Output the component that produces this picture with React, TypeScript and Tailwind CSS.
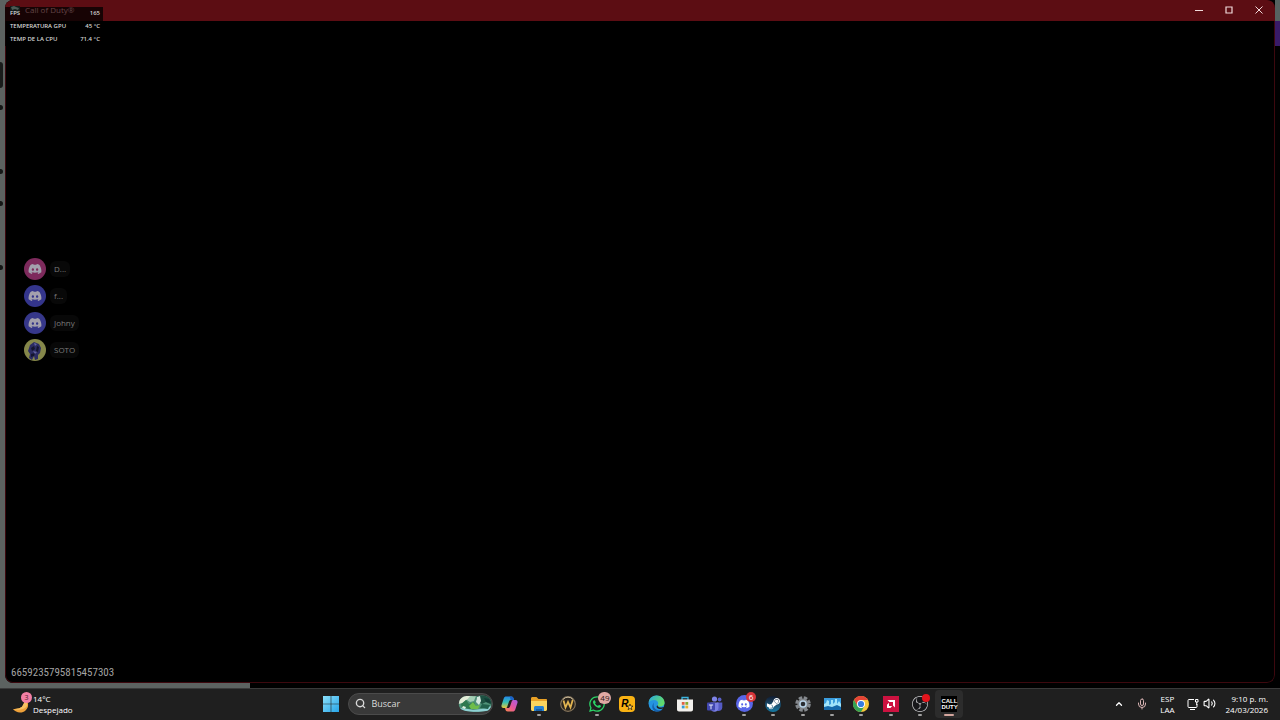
import React from "react";
import { ChevronUp, Mic, Search, Volume2 } from "lucide-react";
import { FaDiscord, FaSteamSymbol, FaWhatsapp } from "react-icons/fa";
import { SiObsstudio } from "react-icons/si";
import clsx from "clsx";

const stats = [
  { label: "FPS", value: "165" },
  { label: "TEMPERATURA GPU", value: "45 °C" },
  { label: "TEMP DE LA CPU", value: "71.4 °C" },
];

const members = [
  { name: "D...", color: "bg-[#7d2a5c]" },
  { name: "f...", color: "bg-[#34358c]" },
  { name: "Johny", color: "bg-[#36378a]" },
  { name: "SOTO", color: "bg-[#85874a]", custom: true },
];

function WindowsLogo() {
  return (
    <svg viewBox="0 0 16 16" className="size-4">
      <defs>
        <linearGradient id="win" x1="0" y1="0" x2="1" y2="1">
          <stop offset="0" stopColor="#8be0fb" />
          <stop offset="1" stopColor="#27a5e8" />
        </linearGradient>
      </defs>
      <path
        fill="url(#win)"
        d="M0 0h7.7v7.7H0zM8.300 0H16v7.700H8.300zM0 8.300h7.700V16H0zM8.300 8.300H16V16H8.300z"
      />
    </svg>
  );
}

function SearchArt() {
  return (
    <svg viewBox="0 0 34 18" className="h-[18px] w-[34px]">
      <defs>
        <clipPath id="artClip">
          <path d="M5 2C9 0 14 2 19 1s10-1 13 3c3 5 1 11-4 12-6 1-14 1-20 0C3 15 0 12 1 8c0-3 2-5 4-6z" />
        </clipPath>
      </defs>
      <g clipPath="url(#artClip)">
        <path fill="#4f9279" d="M0 0h34v18H0z" />
        <path fill="#e4edd8" d="M0 0h14l-2 4-4 1-3 3-5 1z" />
        <path fill="#a5cfb5" d="M12 1h6l-2 5-4 1-3-2z" />
        <path fill="#1d5142" d="M20 0h14v10l-6-3-4 2-6-4z" />
        <path fill="#d5e9df" d="M19 2l3-1 1 5-2 4-3-3z" />
        <path fill="#2e7950" d="M3 9l5-4 3 4 5-2 2 5-6 2-8-1z" />
        <path fill="#6ebd4a" d="M11 11l4-4 3 4 4-1-2 4h-7z" />
        <path fill="#8ed1d4" d="M2 13l8 1 5 1 8-1 11-3v7H2z" />
        <path fill="#21604c" d="M24 9l8 1-2 4-8-1z" />
        <path fill="#123c36" d="M26 3l5 1 2 4-5-1z" />
        <path fill="#dceee0" d="M5 11l3 1-1 2-3-1z" />
      </g>
    </svg>
  );
}

function Copilot() {
  return (
    <svg viewBox="0 0 17 16" className="h-4 w-[17px]">
      <defs>
        <linearGradient id="copA" x1="0" y1="0" x2="0" y2="1">
          <stop offset="0" stopColor="#2389e9" />
          <stop offset=".5" stopColor="#36bfb3" />
          <stop offset="1" stopColor="#e8c83c" />
        </linearGradient>
        <linearGradient id="copB" x1="1" y1="0" x2="0" y2="1">
          <stop offset="0" stopColor="#a55de6" />
          <stop offset=".5" stopColor="#e6559d" />
          <stop offset="1" stopColor="#f78549" />
        </linearGradient>
      </defs>
      <path fill="url(#copA)" d="M5.3.5h5c1.4 0 2 .8 2.3 2l.4 1.500H9.800c-1 0-1.500.6-1.800 1.500l-1.700 5c-.3 1-.9 1.500-1.900 1.500H2.500C.8 12 .1 10.700.6 9L2.800 2.300C3.200 1.100 4 .5 5.300.5z" />
      <path fill="url(#copB)" d="M11.700 15.500h-5c-1.400 0-2-.8-2.300-2L4 12h3.200c1 0 1.500-.6 1.800-1.500l1.700-5c.3-1 .9-1.500 1.900-1.500h1.900c1.700 0 2.400 1.300 1.900 3l-2.200 6.700c-.4 1.200-1.200 1.800-2.500 1.800z" />
      <path fill="#1c61c9" d="M10.300.5c1.400 0 2 .8 2.300 2L13 4H9.800L8.700.5z" />
    </svg>
  );
}

function Explorer() {
  return (
    <svg viewBox="0 0 18 16" className="h-4 w-[18px]">
      <path fill="#e9a126" d="M1 2.500C1 1.600 1.600 1 2.500 1h4L8.500 3H16c.6 0 1 .4 1 1v4H1z" />
      <path fill="#fbd55e" d="M1 5h16v8.500c0 .8-.7 1.500-1.500 1.500h-13C1.700 15 1 14.300 1 13.500z" />
      <path fill="#2781d1" d="M4 15v-3.500C4 10.700 4.700 10 5.500 10h7c.8 0 1.500.7 1.500 1.500V15z" />
      <path fill="#165fa6" d="M6 13h6v2H6z" />
    </svg>
  );
}

function WLauncher() {
  return (
    <svg viewBox="0 0 16 16" className="size-4">
      <circle cx="8" cy="8" r="7.300" fill="#2a241c" stroke="#85745a" strokeWidth="1.200" />
      <path d="M3 3.500A6.500 6.500 0 0 1 13 3.500" stroke="#c8b99b" fill="none" />
      <path
        d="M3.500 4.500L5.500 11.500 8 6l2.500 5.500L12.700 4"
        fill="none"
        stroke="#e2b551"
        strokeWidth="1.800"
      />
    </svg>
  );
}

function Rockstar() {
  return (
    <span className="relative flex size-4 items-center justify-center rounded-sm bg-[#f9b213] pr-1 font-['Liberation_Sans'] text-[10px] leading-none font-bold text-black italic">
      R
      <svg viewBox="0 0 10 10" className="absolute right-0.5 bottom-0.5 size-1.5">
        <path
          fill="#f9d27a"
          stroke="#000"
          strokeWidth="1"
          d="M5 0l1.300 3.500H10L7 5.800 8.200 9.500 5 7.300 1.800 9.500 3 5.800 0 3.500h3.700z"
        />
      </svg>
    </span>
  );
}

function Edge() {
  return (
    <svg viewBox="0 0 17 17" className="size-[17px]">
      <defs>
        <linearGradient id="edgeTop" x1="0" y1="0" x2="1" y2=".4">
          <stop offset="0" stopColor="#29a8e0" />
          <stop offset="1" stopColor="#62db6a" />
        </linearGradient>
      </defs>
      <circle cx="8.500" cy="8.500" r="8" fill="#2494e0" />
      <path fill="url(#edgeTop)" d="M.6 7.700C1 3.500 4.500.5 8.600.5c4.700 0 8 3.500 8 7 0 2.600-1.900 4-4.200 4-2 0-2.900-.7-2.900-1.300 0-.5.7-.8.7-2C10.200 6.300 8.500 5 6.300 5 3.500 5 1.500 6.300.6 7.700z" />
      <path fill="#1560ae" d="M6 7.500c-1.500 3.800 1 7.800 5 7.800 1.500 0 3-.5 4-1.300-1.300 1.700-3.600 2.600-6 2.600C4.500 16.500 2.700 11 6 7.500z" />
      <path fill="#1f1f1f" d="M9.500 10.200c0 1.700 2 2.500 3.900 2.400 1.200 0 2.200-.4 2.900-.8l-.9 1.500c-1.200.6-2.400.8-3.500.6C8.800 13.500 7.700 11.500 9.500 10.200z" />
    </svg>
  );
}

function Store() {
  return (
    <svg viewBox="0 0 16 16" className="size-4">
      <path d="M5 4V1.500h6V4" fill="none" stroke="#3bb4df" strokeWidth="1.300" />
      <path fill="#f1efec" d="M0 3.500h16v10c0 1-.8 2-2 2H2c-1.200 0-2-1-2-2z" />
      <path fill="#df6043" d="M4.800 6h2.800v2.800H4.800z" />
      <path fill="#83a930" d="M8.400 6h2.800v2.800H8.400z" />
      <path fill="#369bd5" d="M4.800 9.600h2.800v2.800H4.800z" />
      <path fill="#e8b22d" d="M8.400 9.600h2.800v2.800H8.400z" />
    </svg>
  );
}

function Teams() {
  return (
    <svg viewBox="0 0 17 16" className="h-4 w-[17px]">
      <circle cx="8.500" cy="3" r="2.600" fill="#7e83e7" />
      <circle cx="13.600" cy="3.500" r="1.900" fill="#5a60c9" />
      <path fill="#555bc4" d="M11 6.500h5.300v5a3.500 3.500 0 0 1-5.300 3z" />
      <path fill="#7a7fe2" d="M4.500 6.500h8v5.300c0 2.500-1.800 4-4 4s-4-1.500-4-4z" />
      <rect x="1" y="6.500" width="8" height="8" rx="1" fill="#4147af" />
      <path fill="#e4e5fb" d="M2.900 8.500h4.200v1H5.500v3.700h-1V9.500H2.900z" />
    </svg>
  );
}

function DiscordIcon() {
  return (
    <span className="flex size-[17px] items-center justify-center rounded-full bg-[#5966e8] text-white">
      <FaDiscord size={12} />
    </span>
  );
}

function Steam() {
  return (
    <span className="flex size-4 items-center justify-center rounded-full bg-linear-to-b from-[#101b30] to-[#147ba5] text-white">
      <FaSteamSymbol size={15} />
    </span>
  );
}

function Gear() {
  return (
    <svg viewBox="0 0 16 16" className="size-4">
      <circle cx="8" cy="8" r="6.300" fill="none" stroke="#85898e" strokeWidth="3" strokeDasharray="3.400 1.548" />
      <circle cx="8" cy="8" r="5.600" fill="#82868b" />
      <circle cx="8" cy="8" r="3.800" fill="#b9d3e8" />
      <circle cx="8" cy="8" r="2.300" fill="#292c31" />
    </svg>
  );
}

function Performance() {
  return (
    <svg viewBox="0 0 17 14" className="h-3.5 w-[17px]">
      <path fill="#3b9ddd" d="M0 1h17v11H0z" />
      <path fill="#a0e4fa" d="M0 7l2-1 1-3 2 1v4l2-1V3h2v4l2-2V2h2v5l2-3 2 3v5H0z" />
      <path fill="#1569aa" d="M0 10l4-1 4 1 5-2 4 2v3H0z" />
    </svg>
  );
}

function Chrome() {
  return (
    <svg viewBox="0 0 16 16" className="size-4">
      <circle cx="8" cy="8" r="8" fill="#f6c83b" />
      <path fill="#e54436" d="M1.070 4A8 8 0 0 1 14.930 4H8L4.500 10z" />
      <path fill="#35a354" d="M1.070 4A8 8 0 0 0 8 16l3.500-6H4.500z" />
      <circle cx="8" cy="8" r="4" fill="#fff" />
      <circle cx="8" cy="8" r="3.100" fill="#377de0" />
    </svg>
  );
}

function Amd() {
  return (
    <svg viewBox="0 0 16 16" className="size-4">
      <path fill="#cc1240" d="M0 0h16v16H0z" />
      <path fill="#fff" d="M4.500 4H12v7.500L10 9.500V6H6.500z" />
      <path fill="#fff" d="M6 6.800v3.200h3.200L7.400 12H4V8.700z" />
    </svg>
  );
}

function Obs() {
  return (
    <span className="flex size-4 items-center justify-center rounded-full bg-[#17171a] text-[#c8c8ca]">
      <SiObsstudio size={16} />
    </span>
  );
}

function Duty() {
  return (
    <span className="flex size-4 flex-col justify-center bg-black font-['Liberation_Sans'] text-[6px] leading-[6px] font-bold text-white">
      <span>CALL</span>
      <span>DUTY</span>
    </span>
  );
}

const apps = [
  { name: "Copilot", icon: <Copilot /> },
  { name: "Explorador", icon: <Explorer />, running: true },
  { name: "Launcher", icon: <WLauncher /> },
  {
    name: "WhatsApp",
    icon: <FaWhatsapp size={18} color="#2bd366" />,
    running: true,
    badge: "49",
    badgeStyle: "top-0.5 right-0 h-3 px-0.5 bg-[#e0a9a4] text-[#2b1717]",
  },
  { name: "Rockstar Games", icon: <Rockstar /> },
  { name: "Edge", icon: <Edge /> },
  { name: "Store", icon: <Store /> },
  { name: "Teams", icon: <Teams /> },
  {
    name: "Discord",
    icon: <DiscordIcon />,
    running: true,
    badge: "6",
    badgeStyle: "top-0.5 right-0.5 size-2.5 bg-[#d6353b] text-white",
  },
  { name: "Steam", icon: <Steam />, running: true },
  { name: "Configuración", icon: <Gear />, running: true },
  { name: "Rendimiento", icon: <Performance />, running: true },
  { name: "Chrome", icon: <Chrome />, running: true },
  { name: "AMD", icon: <Amd />, running: true },
  {
    name: "OBS",
    icon: <Obs />,
    running: true,
    badge: "",
    badgeStyle: "top-1 right-1 size-2 bg-[#e3141c]",
  },
  { name: "Call of Duty", icon: <Duty />, running: true, active: true },
];

function TitleBar() {
  return (
    <header className="flex h-[21px] shrink-0 bg-[#5c0d13]">
      <div className="relative z-10 flex h-5 flex-1 items-center gap-1 pl-1 font-['Open_Sans'] text-[8px] text-[#654548]">
        <svg viewBox="0 0 12 12" className="size-3">
          <path fill="#141b19" d="M1 2h10v8H1z" />
          <path fill="#4b5a55" d="M2 3l3-1 2 1 3 1-1 2-3-1-3 1z" />
        </svg>
        <span>Call of Duty®</span>
      </div>
      <div className="flex h-5 items-center pr-px text-[#f0dadb]">
        <button aria-label="Minimizar" className="flex w-[30px] justify-center">
          <svg viewBox="0 0 8 8" className="size-2" stroke="currentColor">
            <path d="M0 4.500h8" />
          </svg>
        </button>
        <button aria-label="Maximizar" className="flex w-[30px] justify-center">
          <svg viewBox="0 0 8 8" className="size-2" stroke="currentColor" fill="none">
            <path d="M1 1h6v6H1z" strokeWidth="1.200" />
          </svg>
        </button>
        <button aria-label="Cerrar" className="flex w-[30px] justify-center">
          <svg viewBox="0 0 8 8" className="size-2" stroke="currentColor">
            <path d="M.5.5l7 7M7.500.5l-7 7" />
          </svg>
        </button>
      </div>
    </header>
  );
}

function StatsOverlay() {
  return (
    <div className="absolute top-[7px] left-0 w-[98px] bg-black/75">
      <dl className="relative z-20 pr-[3px] pl-[5px] font-['Noto_Sans'] text-[6px] leading-[13px] font-medium text-[#dedede]">
        {stats.map((s) => (
          <div key={s.label} className="flex justify-between">
            <dt>{s.label}</dt>
            <dd>{s.value}</dd>
          </div>
        ))}
      </dl>
    </div>
  );
}

function VoiceOverlay() {
  return (
    <ul className="absolute top-[258px] left-[19px] flex flex-col gap-[5px]">
      {members.map((m) => (
        <li key={m.name} className="flex items-center gap-1">
          <span
            className={clsx(
              "flex size-[22px] items-center justify-center rounded-full text-[#a3a0ad]",
              m.color
            )}
          >
            {m.custom ? (
              <svg viewBox="0 0 22 22" className="size-[22px]">
                <path fill="#2b2c62" d="M6 6l4-3 5 2 2 4-1 5-2 2v4l-3 1-1-4-2 4-3-2 1-4-2-3z" />
                <path fill="#14152e" d="M7 9l3-2 1 3-3 2zM13 7l2 1-1 5-2-1zM7 15l4-1-1 3-3 1z" />
                <path fill="#6262a0" d="M10 4l3 1-2 2zM9 12l4 1-2 2z" />
              </svg>
            ) : (
              <FaDiscord size={14} />
            )}
          </span>
          <span className="rounded-md bg-[#080808] px-1 font-['Open_Sans'] text-[8px] leading-4 text-[#7c7c7c]">
            {m.name}
          </span>
        </li>
      ))}
    </ul>
  );
}

function GameWindow() {
  return (
    <main className="relative flex flex-1 flex-col overflow-hidden rounded-lg bg-black">
      <TitleBar />
      <div className="flex flex-1 items-end rounded-b-lg border border-t-0 border-[#3d080e] px-[5px] pb-px">
        <span className="font-['Liberation_Sans_Narrow','Roboto_Condensed','Roboto'] text-[11px] leading-4 text-[#a3a3a3]">
          6659235795815457303
        </span>
      </div>
      <StatsOverlay />
      <VoiceOverlay />
    </main>
  );
}

function LeftEdge() {
  return (
    <div className="relative w-[5px] bg-[#5c6260]">
      <i className="absolute top-[62px] left-0 h-[26px] w-[3px] rounded-r-sm bg-[#191c1b]" />
      <i className="absolute top-[105px] left-0 h-[5px] w-[3px] rounded-r-full bg-[#151716]" />
      <i className="absolute top-[169px] left-0 h-[5px] w-[3px] rounded-r-full bg-[#151716]" />
      <i className="absolute top-[201px] left-0 h-[5px] w-[3px] rounded-r-full bg-[#151716]" />
      <i className="absolute top-[265px] left-0 h-[5px] w-[3px] rounded-r-full bg-[#151716]" />
    </div>
  );
}

function Taskbar() {
  return (
    <footer className="flex h-8 shrink-0 items-center border-t border-[#3a3a3a] bg-[#1f1f1f] pb-0.5 font-['Open_Sans'] text-[8px] leading-[11px] text-white">
      <div className="flex flex-1 items-center gap-px pl-3">
        <span className="relative size-5">
          <svg viewBox="0 0 20 20" className="size-5">
            <path fill="#eea13a" d="M13 4c4 4 4 9 1 12-4 4-10 3-13-1 5 0 9-1 10-4 1-2 2-4 2-7z" />
            <path fill="#f8c263" d="M13 5c3 4 3 7 0 9-3 2-8 2-12 1 5 0 9-1 10-4 1-2 2-3 2-6z" />
          </svg>
          <span className="absolute -top-0.5 right-0 flex size-[11px] items-center justify-center rounded-full bg-[#f47fa5] text-[7px] text-[#521c2e]">
            3
          </span>
        </span>
        <div>
          <div>14°C</div>
          <div>Despejado</div>
        </div>
      </div>
      <nav className="flex h-full items-center gap-[3px]">
        <button aria-label="Inicio" className="flex w-7 justify-center">
          <WindowsLogo />
        </button>
        <label className="flex h-[22px] w-[145px] items-center gap-1.5 rounded-full border border-[#4b4b4b] bg-[#393939] pl-1.5">
          <Search size={11} strokeWidth={3} className="text-[#d8d8d8]" />
          <input
            type="text"
            aria-label="Buscar"
            placeholder="Buscar"
            className="min-w-0 flex-1 bg-transparent text-[9px] placeholder:text-[#dcdcdc] focus:outline-none"
          />
          <SearchArt />
        </label>
        <div className="flex h-full w-[468px] items-center justify-between">
          {apps.map((app) => (
            <button
              key={app.name}
              aria-label={app.name}
              className={clsx(
                "relative flex h-7 w-7 items-center justify-center rounded-sm",
                app.active && "bg-[#2c2c2c]"
              )}
            >
              {app.icon}
              {app.badge !== undefined && (
                <span
                  className={clsx(
                    "absolute flex items-center justify-center rounded-full text-[8px] leading-none",
                    app.badgeStyle
                  )}
                >
                  {app.badge}
                </span>
              )}
              {app.running && (
                <i
                  className={clsx(
                    "absolute bottom-0.5 h-0.5 rounded-full",
                    app.active ? "w-2.5 bg-[#d3a59d]" : "w-1 bg-[#a0a0a0]"
                  )}
                />
              )}
            </button>
          ))}
        </div>
      </nav>
      <div className="flex flex-1 items-center justify-end pr-3">
        <button aria-label="Mostrar iconos ocultos" className="mr-3">
          <ChevronUp size={10} strokeWidth={3} />
        </button>
        <Mic size={12} className="mr-3 text-[#d9b4b4]" />
        <div className="mr-3 text-center">
          <div>ESP</div>
          <div>LAA</div>
        </div>
        <svg viewBox="0 0 12 12" className="mr-1 size-3" fill="none" stroke="currentColor">
          <path d="M7 1.500H2a1 1 0 0 0-1 1v6a1 1 0 0 0 1 1h7a1 1 0 0 0 1-1V6M3 11.500h5" />
          <path d="M8.500 1.500h2.500v2.500H8.500zM9.700 4v3" />
        </svg>
        <Volume2 size={13} className="mr-2.5" />
        <div className="text-right">
          <div>9:10 p. m.</div>
          <div>24/03/2026</div>
        </div>
      </div>
    </footer>
  );
}

export default function App() {
  return (
    <div className="flex h-screen flex-col overflow-hidden bg-black">
      <div className="flex min-h-0 flex-1">
        <LeftEdge />
        <div className="flex flex-1 bg-linear-to-r from-[#5c6260] from-50% to-black to-50%">
          <GameWindow />
        </div>
        <div className="w-[5px] bg-black">
          <div className="h-[21px] bg-[#566260]" />
          <div className="h-[25px] bg-[#391b68]" />
        </div>
      </div>
      <div className="h-[5px] w-[250px] bg-[#5c6260]" />
      <Taskbar />
    </div>
  );
}
